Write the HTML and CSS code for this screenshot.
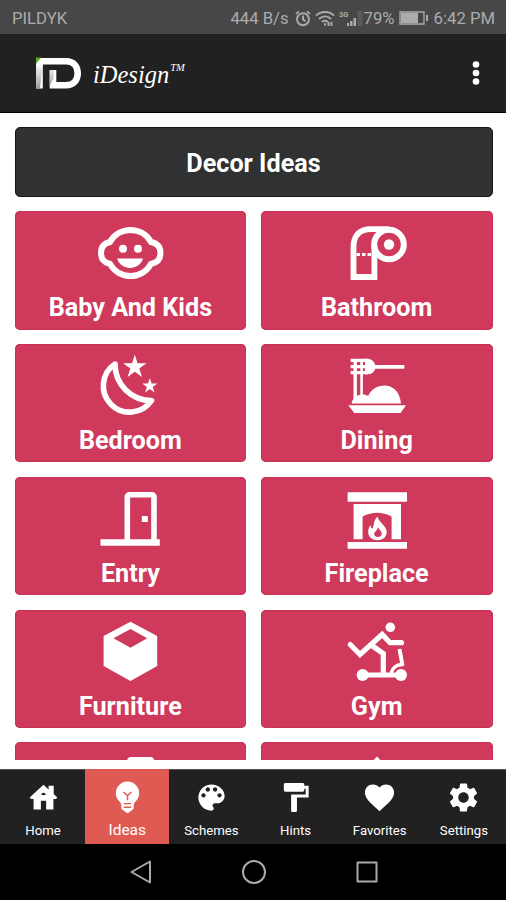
FILE: index.html
```html
<!DOCTYPE html>
<html lang="en">
<head>
    <meta charset="utf-8">
    <title>iDesign</title>
    <link rel="stylesheet" href="styles.css">
</head>
<body>
<div class="status">
    <span class="carrier">PILDYK</span>
    <span class="speed">444 B/s</span>
    <svg class="alarm" width="16" height="17" viewBox="0 0 16 17" fill="none" stroke="currentColor" stroke-width="1.9">
        <circle cx="8" cy="9.3" r="6"/>
        <path d="M8 5.5v4l2.5 1.8M1 4l3-2.6M15 4l-3-2.6"/>
    </svg>
    <svg class="wifi" width="20" height="17" viewBox="0 0 20 17" fill="none" stroke="currentColor" stroke-width="2">
        <path d="M1 5.6C6 .8 14 .8 19 5.6M4 9c3.6-3.3 8.4-3.3 12 0M7 12c2-1.6 4-1.6 6 0"/>
        <path d="M10 13.2v2.2M13.5 12v4M16.5 12v4" stroke-width="2"/>
    </svg>
    <svg class="signal" width="25" height="17" viewBox="0 0 25 17" fill="currentColor">
        <text x="0" y="7" font-size="7.5" font-weight="700">3G</text>
        <path d="M8 13h2v3H8zM11 11h2.500v5H11zM14.500 8h2.500v8h-2.500z"/>
        <path d="M18.500 1h5v15h-5z" opacity=".2"/>
    </svg>
    <span class="percent">79%</span>
    <svg class="battery" width="30" height="14" viewBox="0 0 30 14">
        <path d="M1 1h24v12H1z" fill="none" stroke="currentColor" stroke-width="1.3"/>
        <path d="M2 2h17v10H2zM27 4h2v6h-2z" fill="currentColor"/>
    </svg>
    <span class="clock">6:42 PM</span>
</div>

<div class="appbar">
    <svg class="logo" width="48" height="34" viewBox="0 0 48 34">
        <defs>
            <linearGradient id="shade" x1="0" y1="0" x2="0" y2="1">
                <stop offset="0" stop-color="#fff"/>
                <stop offset="1" stop-color="#999"/>
            </linearGradient>
        </defs>
        <path d="M4.500 32.500V5.300H31c8 0 11.700 5.500 11.700 11.900S39 29.200 31 29.200H18V14" fill="none" stroke="#fff" stroke-width="6.600"/>
        <path d="M1.200 8h6.600L5 32.500H1.200zM14.700 14h4v8l-4 8z" fill="url(#shade)"/>
        <path d="M1 1.500h5.500L1 7.500z" fill="#5cab2b"/>
    </svg>
    <span class="brand">iDesign<sup>TM</sup></span>
    <svg class="more" width="10" height="26" viewBox="0 0 10 26" fill="#fff">
        <circle cx="5" cy="4.500" r="3.300"/>
        <circle cx="5" cy="13" r="3.300"/>
        <circle cx="5" cy="21.500" r="3.300"/>
    </svg>
</div>

<div class="content">
    <h1 class="title">Decor Ideas</h1>
    <div class="grid">
        <div class="card">
            <svg class="icon" viewBox="0 0 80 76">
                <path class="line" stroke-width="6" d="M20 31Q11 33 11 42Q11 51 20 53A23.500 23.500 0 0 0 61 53Q70.500 51 70.500 42Q70.500 33 61 31A23.500 23.500 0 0 0 20 31z"/>
                <circle cx="33" cy="37.800" r="4"/>
                <circle cx="48" cy="37.800" r="4"/>
                <path d="M27.200 47.500h25.800c-3.500 12.500-22.500 12.500-25.800 0z"/>
            </svg>
            <span>Baby And Kids</span>
        </div>
        <div class="card">
            <svg class="icon" viewBox="0 0 80 76">
                <path class="line" stroke-width="5.800" d="M37.400 34V66H16.500V36C16.500 24 23 18.200 34 18.200H52"/>
                <circle class="line" stroke-width="6" cx="52" cy="33.500" r="14.800"/>
                <circle cx="52" cy="33.500" r="5.200"/>
                <path class="line" stroke-width="3" stroke-dasharray="3.500 2" d="M19.500 43.500H35"/>
            </svg>
            <span>Bathroom</span>
        </div>
        <div class="card">
            <svg class="icon" viewBox="0 0 80 76">
                <path class="line" stroke-width="5.600" stroke-linejoin="round" d="M25 20A26.300 26.300 0 1 0 61.500 56.500C42 57 25 41 25 20z"/>
                <path transform="translate(44.800 23) scale(12.300)" d="M0-1L.225-.309H.951L.363.118.588.809 0 .382-.588.809-.363.118-.951-.309H-.225z"/>
                <path transform="translate(59.800 42) scale(8)" d="M0-1L.225-.309H.951L.363.118.588.809 0 .382-.588.809-.363.118-.951-.309H-.225z"/>
            </svg>
            <span>Bedroom</span>
        </div>
        <div class="card">
            <svg class="icon" viewBox="0 0 80 76">
                <path class="line" stroke-width="3.400" d="M13.600 16.400H31M13.600 22.600H31M13.600 28.600H31"/>
                <path d="M28 14.700h3c4 0 7 4 7.200 6.300H67.300v3.800H38.200c-.5 2.500-3 5.500-7.200 5.500h-3z"/>
                <path class="line" stroke-width="3.400" d="M18.200 15V55"/>
                <path class="line" stroke-width="2.600" d="M24.600 15V55"/>
                <path d="M14.600 59.500c1-7 9-11.500 16.500-7.500 6-14.500 31-16 32.900 7.500zM11.300 61.300H69L63.600 68.900H17.300z"/>
            </svg>
            <span>Dining</span>
        </div>
        <div class="card">
            <svg class="icon" viewBox="0 0 80 76">
                <path class="line" stroke-width="5.600" d="M37.300 64V20.500q0-2.700 2.700-2.700H61.300q2.700 0 2.700 2.700V64"/>
                <path d="M10.500 62.300H69.800V68.700H10.500zM51.800 39h6v6h-6z"/>
            </svg>
            <span>Entry</span>
        </div>
        <div class="card">
            <svg class="icon" viewBox="0 0 80 76">
                <path d="M10.600 15.300H70V24.700H10.600zM10.600 65H70V71.700H10.600z"/>
                <path d="M16.600 27H64V62.300H54.600V39.500Q40 32 25.600 39.500V62.300H16.600z"/>
                <path fill-rule="evenodd" d="M40.500 39.500c1 6 9.500 9 9.200 16-.3 5-4.500 7.700-9.200 7.700-5 0-9-3-9.300-7.700-.2-3.500 1-5.500 2.300-7.500.3 2.500 1 3.500 2.300 3.500 1.500-4.500.7-8 4.700-12zM40.800 50c.3 3-3.800 4.500-3.600 7.300.2 1.700 1.800 2.700 3.600 2.700 2.400 0 4-1.500 3.900-3.500-.1-2.500-1.700-3-3.900-6.500z"/>
            </svg>
            <span>Fireplace</span>
        </div>
        <div class="card">
            <svg class="icon" viewBox="0 0 80 76">
                <path fill-rule="evenodd" d="M40.500 11.700L67.200 26V56L40.500 71 13.600 56V26zM40.500 19L23.500 28.300 40.500 37.700 57.200 28.300z"/>
            </svg>
            <span>Furniture</span>
        </div>
        <div class="card">
            <svg class="icon" viewBox="0 0 80 76">
                <circle cx="53.300" cy="17.300" r="4.800"/>
                <path class="line" stroke-width="5.200" stroke-linecap="round" d="M13.200 34.500L23 44.500 45.200 24.500 53 32.700H64.500"/>
                <path class="line" stroke-width="5.200" d="M35.500 36L46.300 43.500V64"/>
                <path class="line" stroke-width="4" d="M62.500 39L65.500 55.500"/>
                <path class="line" stroke-width="3.400" d="M54 63Q57 54 66.500 54.500"/>
                <path class="line" stroke-width="5" d="M25.600 65H64"/>
                <circle cx="25.600" cy="65" r="6"/>
                <circle cx="64" cy="65" r="6"/>
            </svg>
            <span>Gym</span>
        </div>
        <div class="card">
            <svg class="icon" viewBox="0 0 80 76">
                <path d="M37 20q0-5 4-5H60.500q4 0 4 5V68H37z"/>
            </svg>
        </div>
        <div class="card">
            <svg class="icon" viewBox="0 0 80 76">
                <path d="M40 14.500L66 42H14z"/>
            </svg>
        </div>
    </div>
</div>

<div class="tabs">
    <div class="tab">
        <svg viewBox="0 0 24 24"><path fill-rule="evenodd" d="M2.500 12L12 3.300 15.500 6.500V4h3.500v5.600L21.500 12 20.500 13H18.800V20.300H13.800V14.300H10.200V20.300H5.200V13H3.500zM10.500 10.200h3a1.500 1.500 0 0 0-3 0z"/></svg>
        <span>Home</span>
    </div>
    <div class="tab active">
        <svg viewBox="0 0 24 24"><path d="M12 1a8 8 0 0 0-8 8c0 3.200 1.700 4.800 3 6.200.7.900.8 2.300.8 4.500L10 21.500q2 2.500 4 0l2.200-1.800c0-2.200.1-3.600.8-4.500 1.300-1.400 3-3 3-6.200a8 8 0 0 0-8-8z"/><path class="filament" d="M9.200 8.200L12 10.700 14.800 8.200M12 10.500v3.300M9.500 16.200h5M9.500 18.700h5"/></svg>
        <span>Ideas</span>
    </div>
    <div class="tab">
        <svg viewBox="0 0 24 24"><path d="M12 3c-4.970 0-9 4.030-9 9s4.030 9 9 9c.83 0 1.500-.67 1.500-1.500 0-.39-.15-.74-.39-1.010-.23-.26-.38-.61-.38-.99 0-.83.67-1.500 1.500-1.500H16c2.760 0 5-2.240 5-5 0-4.420-4.030-8-9-8zm-5.500 9c-.83 0-1.500-.67-1.500-1.500S5.670 9 6.500 9 8 9.670 8 10.500 7.330 12 6.500 12zm3-4C8.670 8 8 7.330 8 6.500S8.670 5 9.500 5s1.500.67 1.500 1.500S10.330 8 9.500 8zm5 0c-.83 0-1.500-.67-1.500-1.500S13.670 5 14.500 5s1.500.67 1.500 1.500S15.330 8 14.500 8zm3 4c-.83 0-1.500-.67-1.500-1.500S16.670 9 17.500 9s1.500.67 1.500 1.500-.67 1.500-1.500 1.500z"/></svg>
        <span>Schemes</span>
    </div>
    <div class="tab">
        <svg viewBox="0 0 24 24"><path d="M18 4V3c0-.55-.45-1-1-1H5c-.55 0-1 .45-1 1v4c0 .55.45 1 1 1h12c.55 0 1-.45 1-1V6h1v4H9v11c0 .55.45 1 1 1h2c.55 0 1-.45 1-1v-9h8V4h-3z"/></svg>
        <span>Hints</span>
    </div>
    <div class="tab">
        <svg viewBox="0 0 24 24"><path d="M12 21.350l-1.450-1.320C5.400 15.360 2 12.280 2 8.500 2 5.420 4.420 3 7.500 3c1.740 0 3.410.81 4.500 2.090C13.090 3.810 14.760 3 16.500 3 19.580 3 22 5.420 22 8.500c0 3.780-3.400 6.860-8.550 11.540L12 21.350z"/></svg>
        <span>Favorites</span>
    </div>
    <div class="tab">
        <svg viewBox="0 0 24 24"><path d="M19.140 12.940c.04-.3.060-.61.060-.94 0-.32-.02-.64-.07-.94l2.030-1.580c.18-.14.23-.41.12-.61l-1.920-3.320c-.12-.22-.37-.29-.59-.22l-2.390.96c-.5-.38-1.030-.7-1.620-.94l-.36-2.540c-.04-.24-.24-.41-.48-.41h-3.840c-.24 0-.43.17-.47.41l-.36 2.540c-.59.24-1.130.57-1.620.94l-2.390-.96c-.22-.08-.47 0-.59.22L2.740 8.870c-.12.21-.08.470.12.610l2.030 1.580c-.05.3-.09.630-.09.940s.02.640.07.940l-2.030 1.580c-.18.14-.23.41-.12.61l1.920 3.320c.12.220.37.290.59.220l2.390-.96c.5.380 1.030.7 1.620.940l.36 2.540c.05.240.24.410.48.410h3.840c.24 0 .44-.17.47-.41l.36-2.540c.59-.24 1.130-.56 1.620-.94l2.390.96c.22.080.47 0 .59-.22l1.920-3.320c.12-.22.07-.47-.12-.61l-2.010-1.580zM12 15.600c-1.980 0-3.600-1.620-3.600-3.600s1.620-3.600 3.600-3.600 3.600 1.620 3.600 3.600-1.620 3.600-3.600 3.600z"/></svg>
        <span>Settings</span>
    </div>
</div>

<div class="navbar">
    <svg width="24" height="26" viewBox="0 0 24 26"><path d="M21 2.500V23.500L2.500 13z"/></svg>
    <svg width="26" height="26" viewBox="0 0 26 26"><circle cx="13" cy="13" r="11"/></svg>
    <svg width="24" height="26" viewBox="0 0 24 26"><path d="M2.500 3.500H21.500V22.500H2.500z"/></svg>
</div>
</body>
</html>
```
FILE: styles.css
```css
* {
    box-sizing: border-box;
}

body {
    margin: 0;
    height: 900px;
    display: flex;
    flex-direction: column;
    overflow: hidden;
    background: #fff;
    font-family: Roboto, sans-serif;
}

svg {
    display: block;
    flex: none;
}

.status {
    height: 34px;
    flex: none;
    display: flex;
    align-items: center;
    padding: 2px 11px 0 12px;
    background: #474747;
    color: #acacac;
    font-size: 16.700px;
    white-space: nowrap;
}

.carrier {
    margin-right: auto;
}

.alarm {
    margin-left: 6px;
}

.wifi {
    margin-left: 4px;
}

.signal {
    margin-left: 4px;
}

.battery {
    margin: 0 5px 0 4px;
}

.appbar {
    height: 79px;
    flex: none;
    display: flex;
    align-items: center;
    padding: 0 25px 0 35px;
    background: #212121;
    border-bottom: 1px solid #000;
    color: #fff;
}

.brand {
    margin-left: 10px;
    padding-top: 4px;
    font: italic 24.500px "Liberation Serif", serif;
}

.brand sup {
    font-size: 10.500px;
    line-height: 0;
    vertical-align: 12px;
    margin-left: 1px;
}

.more {
    margin-left: auto;
}

.content {
    height: 647px;
    flex: none;
    overflow: hidden;
    padding: 14px 13.500px 0 14.500px;
}

.title {
    height: 70px;
    margin: 0 0 14.300px;
    border: 1px solid #151617;
    border-radius: 5px;
    background: #2f3132;
    color: #fff;
    font-size: 25.200px;
    font-weight: 700;
    line-height: 71px;
    text-align: center;
}

.grid {
    display: grid;
    grid-template-columns: 1fr 1fr;
    grid-auto-rows: 118.300px;
    gap: 14.500px;
}

.card {
    display: flex;
    flex-direction: column;
    align-items: center;
    border-radius: 5px;
    background: #cf395b;
    box-shadow: inset 0 0 0 1px #c93155;
    color: #fff;
    font-size: 25.200px;
    font-weight: 700;
    line-height: 41px;
}

.icon {
    width: 80px;
    height: 76px;
    fill: #fff;
}

.line {
    fill: none;
    stroke: #fff;
}

.tabs {
    height: 75px;
    flex: none;
    margin-top: 9px;
    padding-left: 1px;
    display: grid;
    grid-template-columns: repeat(6, 1fr);
    background: #212121;
    border-top: 1px solid #555;
}

.tab {
    display: flex;
    flex-direction: column;
    align-items: center;
    padding-top: 10px;
    color: #fff;
    font-size: 13.200px;
    line-height: 31px;
}

.tab svg {
    width: 35px;
    height: 35px;
    fill: #fff;
}

.active {
    margin-top: -1px;
    padding-top: 11px;
    background: #e05a54;
    font-size: 15.500px;
}

.active .filament {
    fill: none;
    stroke: #e05a54;
    stroke-width: 1;
}

.navbar {
    flex: 1;
    display: flex;
    justify-content: center;
    align-items: center;
    gap: 88px;
    padding-left: 1px;
    background: #000;
}

.navbar svg {
    fill: none;
    stroke: #aaa;
    stroke-width: 2;
    stroke-linejoin: round;
}
```
